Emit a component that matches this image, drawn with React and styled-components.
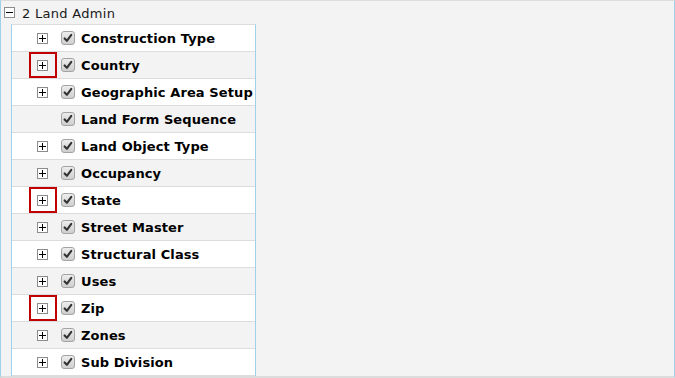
import React from "react";
import styled, { createGlobalStyle } from "styled-components";

const GlobalStyle = createGlobalStyle`
  html, body {
    margin: 0;
    padding: 0;
    background: #f3f3f3;
  }
  * {
    box-sizing: border-box;
  }
`;

const Panel = styled.div`
  width: 675px;
  height: 378px;
  background: #f3f3f3;
  border-top: 1px solid #dcdcdc;
  border-bottom: 2px solid #dcdcdc;
  border-left: 1px solid #9fd0ec;
  border-right: 1px solid #9fd0ec;
  font-family: Verdana, "DejaVu Sans", sans-serif;
  font-size: 13px;
  color: #111;
  overflow: hidden;
`;

const Header = styled.div`
  display: flex;
  align-items: center;
  height: 23px;
  padding-left: 3px;
  gap: 7px;
`;

const HeaderLabel = styled.span`
  color: #1a1a1a;
  padding-top: 1px;
  letter-spacing: 0.3px;
`;

const TreeList = styled.ul`
  list-style: none;
  margin: 0 0 0 10px;
  padding: 0;
  width: 245px;
  border-top: 1px solid #dcdcdc;
  border-left: 1px solid #9fd0ec;
  border-right: 1px solid #9fd0ec;
`;

const Row = styled.li`
  position: relative;
  display: flex;
  align-items: center;
  height: 27px;
  padding-left: 25px;
  border-bottom: 1px solid #dcdcdc;
  background: ${(p) => (p.$shaded ? "#f3f3f3" : "#ffffff")};
`;

const ToggleSlot = styled.span`
  display: flex;
  align-items: center;
  width: 24px;
  height: 100%;
`;

const Highlight = styled.span`
  position: absolute;
  left: 17px;
  top: 0;
  width: 28px;
  height: 26px;
  border: 2px solid #c00000;
  pointer-events: none;
`;

const Label = styled.span`
  font-weight: bold;
  color: #000;
  margin-left: 6px;
  letter-spacing: 0.1px;
  white-space: nowrap;
`;

const ExpandBox = ({ minus }) => (
  <svg width="11" height="11" viewBox="0 0 11 11">
    <rect x="0.5" y="0.5" width="10" height="10" fill="#fff" stroke="#8c8c8c" />
    <rect x="2" y="5" width="7" height="1" fill="#000" />
    {!minus && <rect x="5" y="2" width="1" height="7" fill="#000" />}
  </svg>
);

const CheckBox = () => (
  <svg width="14" height="14" viewBox="0 0 14 14">
    <defs>
      <linearGradient id="cbg" x1="0" y1="0" x2="0" y2="1">
        <stop offset="0" stopColor="#eeeeee" />
        <stop offset="1" stopColor="#cdcdcd" />
      </linearGradient>
    </defs>
    <rect x="0.5" y="0.5" width="13" height="13" rx="2.5" fill="url(#cbg)" stroke="#a4a4a4" />
    <path d="M3.6 7.4 L5.9 9.8 L10.3 3.8" fill="none" stroke="#333" strokeWidth="2.1" strokeLinecap="round" strokeLinejoin="round" />
  </svg>
);

const items = [
  { name: "Construction Type" },
  { name: "Country", marked: true },
  { name: "Geographic Area Setup" },
  { name: "Land Form Sequence", leaf: true },
  { name: "Land Object Type" },
  { name: "Occupancy" },
  { name: "State", marked: true },
  { name: "Street Master" },
  { name: "Structural Class" },
  { name: "Uses" },
  { name: "Zip", marked: true },
  { name: "Zones" },
  { name: "Sub Division" },
];

export default function App() {
  return (
    <>
      <GlobalStyle />
      <Panel>
        <Header>
          <ExpandBox minus />
          <HeaderLabel>2 Land Admin</HeaderLabel>
        </Header>
        <TreeList>
          {items.map((item, i) => (
            <Row key={item.name} $shaded={i % 2 === 1}>
              <ToggleSlot>{!item.leaf && <ExpandBox />}</ToggleSlot>
              <CheckBox />
              <Label>{item.name}</Label>
              {item.marked && <Highlight />}
            </Row>
          ))}
        </TreeList>
      </Panel>
    </>
  );
}
